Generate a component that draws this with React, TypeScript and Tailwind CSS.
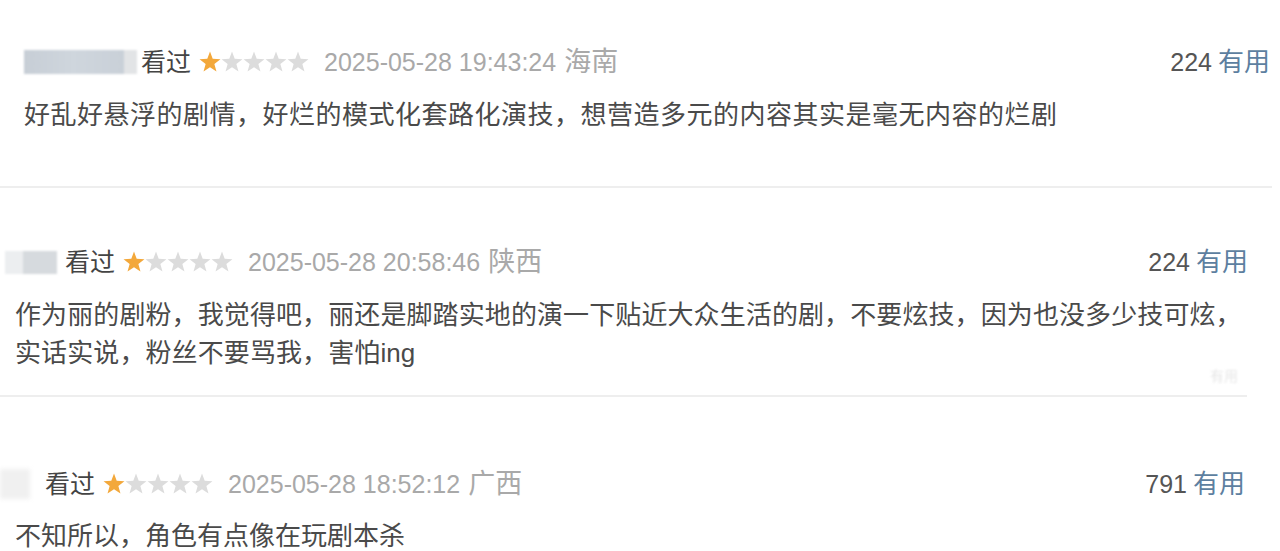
import React from 'react';

const font = { fontFamily: '"Liberation Sans", "Noto Sans CJK SC", sans-serif' };

function Star({ on }: { on: boolean }) {
  return (
    <svg viewBox="0 0 24 24" className="h-[22px] w-[22px]">
      <path
        d="M12 0.6L14.94 8.55L23.4 8.9L16.76 14.15L19.05 22.3L12 17.6L4.95 22.3L7.24 14.15L0.6 8.9L9.06 8.55Z"
        fill={on ? '#f3a83b' : '#dcdcdc'}
      />
    </svg>
  );
}

function Stars() {
  return (
    <div className="flex items-center">
      <Star on />
      <Star on={false} />
      <Star on={false} />
      <Star on={false} />
      <Star on={false} />
    </div>
  );
}

function Header({
  name,
  date,
  region,
  votes,
}: {
  name: React.ReactNode;
  date: string;
  region: string;
  votes: string;
}) {
  return (
    <div className="flex h-[30px] items-center justify-between text-[25px] leading-[30px]">
      <div className="flex items-center">
        {name}
        <span className="text-[#444]">看过</span>
        <div className="ml-[8px]">
          <Stars />
        </div>
        <span className="ml-[15px] text-[#a9a9a9]">{date}</span>
        <span className="ml-[8px] text-[27px] text-[#a9a9a9]">{region}</span>
      </div>
      <div className="flex items-center">
        <span className="text-[#555]">{votes}</span>
        <span className="ml-[6px] text-[26px] text-[#5d7fa0]">有用</span>
      </div>
    </div>
  );
}

export default function App() {
  return (
    <div className="h-[551px] w-[1280px] overflow-hidden bg-white" style={font}>
      {/* first comment */}
      <div className="pt-[47px] pl-[24px] pr-[10px]">
        <Header
          name={
            <div className="mr-[4px] flex h-[24px] w-[113px] blur-[1px]">
              <div className="w-[100px] bg-gradient-to-r from-[#c7ced6] via-[#cfd6dd] to-[#c9d0d8]" />
              <div className="w-[13px] bg-[#e2e4e6]" />
            </div>
          }
          date="2025-05-28 19:43:24"
          region="海南"
          votes="224"
        />
        <div className="mt-[19px] text-[26px] leading-[38px] tracking-[0.5px] text-[#4a4a4a]">
          好乱好悬浮的剧情，好烂的模式化套路化演技，想营造多元的内容其实是毫无内容的烂剧
        </div>
      </div>
      <div className="mt-[52px] h-[2px] w-[1272px] bg-[#eeeeee]" />

      {/* second comment */}
      <div className="pt-[59px] pr-[32px]">
        <div className="pl-[5px]">
          <Header
            name={
              <div className="mr-[8px] flex h-[23px] w-[52px] blur-[1px]">
                <div className="w-[18px] bg-[#eceef0]" />
                <div className="w-[34px] bg-[#d6dade]" />
              </div>
            }
            date="2025-05-28 20:58:46"
            region="陕西"
            votes="224"
          />
        </div>
        <div className="mt-[19px] pl-[15px] text-[26px] leading-[38px] tracking-[0.1px] text-[#4a4a4a]">
          <div>作为丽的剧粉，我觉得吧，丽还是脚踏实地的演一下贴近大众生活的剧，不要炫技，因为也没多少技可炫，</div>
          <div>实话实说，粉丝不要骂我，害怕ing</div>
        </div>
        <div className="flex justify-end pr-[10px]">
          <span className="-mt-[4px] text-[14px] leading-[16px] text-[#e6e6e6] blur-[1px]">有用</span>
        </div>
      </div>
      <div className="mt-[11px] h-[2px] w-[1247px] bg-[#eeeeee]" />

      {/* third comment */}
      <div className="pt-[72px] pr-[35px]">
        <div className="flex">
          <div className="h-[30px] w-[45px] shrink-0 blur-[2px]">
            <div className="h-[30px] w-[30px] bg-[#f0f0f0]" />
          </div>
          <div className="flex-1">
            <Header name={null} date="2025-05-28 18:52:12" region="广西" votes="791" />
          </div>
        </div>
        <div className="mt-[18px] pl-[15px] text-[26px] leading-[38px] text-[#4a4a4a]">
          不知所以，角色有点像在玩剧本杀
        </div>
      </div>
    </div>
  );
}
